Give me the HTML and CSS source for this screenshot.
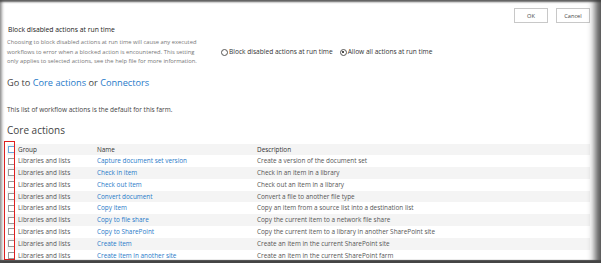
FILE: index.html
```html
<!DOCTYPE html>
<html>
<head>
<meta charset="utf-8">
<link rel="stylesheet" href="styles.css">
</head>
<body>
<div class="frame">
  <div class="top">
    <div class="buttons">
      <button class="btn">OK</button>
      <button class="btn">Cancel</button>
    </div>
    <div class="setting">
      <div class="setting-text">
        <div class="setting-title">Block disabled actions at run time</div>
        <div class="setting-desc">Choosing to block disabled actions at run time will cause any executed<br>workflows to error when a blocked action is encountered. This setting<br>only applies to selected actions, see the help file for more information.</div>
      </div>
      <div class="setting-options">
        <label class="opt"><span class="radio"></span>Block disabled actions at run time</label>
        <label class="opt"><span class="radio checked"></span>Allow all actions at run time</label>
      </div>
    </div>
  </div>
  <div class="goto">Go to <a class="link">Core actions</a> or <a class="link">Connectors</a></div>
  <div class="note">This list of workflow actions is the default for this farm.</div>
  <div class="heading">Core actions</div>
  <table class="grid">
    <tr class="head"><td class="cb"><span class="check check-head"></span></td><td class="c-group">Group</td><td class="c-name">Name</td><td>Description</td></tr>
    <tr><td class="cb"><span class="check"></span></td><td class="c-group">Libraries and lists</td><td class="c-name"><a class="link">Capture document set version</a></td><td>Create a version of the document set</td></tr>
    <tr><td class="cb"><span class="check"></span></td><td class="c-group">Libraries and lists</td><td class="c-name"><a class="link">Check in item</a></td><td>Check in an item in a library</td></tr>
    <tr><td class="cb"><span class="check"></span></td><td class="c-group">Libraries and lists</td><td class="c-name"><a class="link">Check out item</a></td><td>Check out an item in a library</td></tr>
    <tr><td class="cb"><span class="check"></span></td><td class="c-group">Libraries and lists</td><td class="c-name"><a class="link">Convert document</a></td><td>Convert a file to another file type</td></tr>
    <tr><td class="cb"><span class="check"></span></td><td class="c-group">Libraries and lists</td><td class="c-name"><a class="link">Copy item</a></td><td>Copy an item from a source list into a destination list</td></tr>
    <tr><td class="cb"><span class="check"></span></td><td class="c-group">Libraries and lists</td><td class="c-name"><a class="link">Copy to file share</a></td><td>Copy the current item to a network file share</td></tr>
    <tr><td class="cb"><span class="check"></span></td><td class="c-group">Libraries and lists</td><td class="c-name"><a class="link">Copy to SharePoint</a></td><td>Copy the current item to a library in another SharePoint site</td></tr>
    <tr><td class="cb"><span class="check"></span></td><td class="c-group">Libraries and lists</td><td class="c-name"><a class="link">Create item</a></td><td>Create an item in the current SharePoint site</td></tr>
    <tr><td class="cb"><span class="check"></span></td><td class="c-group">Libraries and lists</td><td class="c-name"><a class="link">Create item in another site</a></td><td>Create an item in the current SharePoint farm</td></tr>
  </table>
  <div class="highlight"></div>
  <div class="shade"></div>
</div>
</body>
</html>
```
FILE: styles.css
```css
html, body { margin: 0; padding: 0; }
body { font-family: "Open Sans", "Noto Sans", sans-serif; color: #444; background: #fff; }
.frame { position: relative; width: 601px; height: 263px; overflow: hidden; background: #fff; padding-left: 7px; box-sizing: border-box; }
.top { padding: 8px 11px 0 0; }
.buttons { display: flex; justify-content: flex-end; gap: 8px; }
.btn { width: 34px; height: 15px; padding: 0; border: 1px solid #c8c8c8; background: #fff; font-family: inherit; font-size: 5.6px; color: #444; }
.setting { display: flex; }
.setting-text { width: 214px; }
.setting-title { font-size: 6.8px; line-height: 10px; height: 10px; color: #222; padding-left: 1px; margin-top: 2px; }
.setting-desc { margin-top: 3px; font-size: 5.8px; line-height: 9.5px; color: #777; white-space: nowrap; }
.setting-options { display: flex; gap: 7px; padding-top: 24px; }
.opt { display: flex; align-items: center; font-size: 6.6px; line-height: 10px; height: 10px; color: #333; }
.radio { width: 5px; height: 5px; border: 0.8px solid #555; border-radius: 50%; margin-right: 1px; position: relative; background: #fff; }
.radio.checked::after { content: ""; position: absolute; left: 1.2px; top: 1.2px; width: 2.6px; height: 2.6px; border-radius: 50%; background: #111; }
.goto { margin-top: 9px; font-size: 9.2px; line-height: 14px; color: #444; }
.link { color: #1f7ac9; text-decoration: none; }
.note { margin-top: 15px; font-size: 6.5px; line-height: 10px; color: #444; }
.heading { margin-top: 7px; font-size: 10px; line-height: 16px; color: #444; }
.grid { margin-top: 6px; border-collapse: collapse; width: 583px; font-size: 6.4px; color: #555; }
.grid td { height: 11.8px; padding: 0; line-height: 11.8px; white-space: nowrap; }
.grid tr:nth-child(odd) { background: #f4f4f4; }
.grid .head td { color: #333; }
.cb { width: 11px; }
.c-group { width: 79px; }
.c-name { width: 160px; }
.check { display: block; width: 5px; height: 5px; border: 1px solid #999; background: #fff; margin-left: 0.5px; }
.check-head { border-color: #6aa7dc; }
.highlight { position: absolute; left: 4px; top: 141px; width: 9px; height: 117px; border: 1.5px solid #e02020; }
.shade { position: absolute; inset: 0; pointer-events: none;
  box-shadow: inset 0 3px 2px -1px rgba(60,60,60,0.8), inset 3px 0 3px -1px rgba(80,80,80,0.6), inset -11px 0 7px -5px rgba(70,70,70,0.9), inset 0 -4px 1px -1px rgba(50,50,50,0.9); }
```
